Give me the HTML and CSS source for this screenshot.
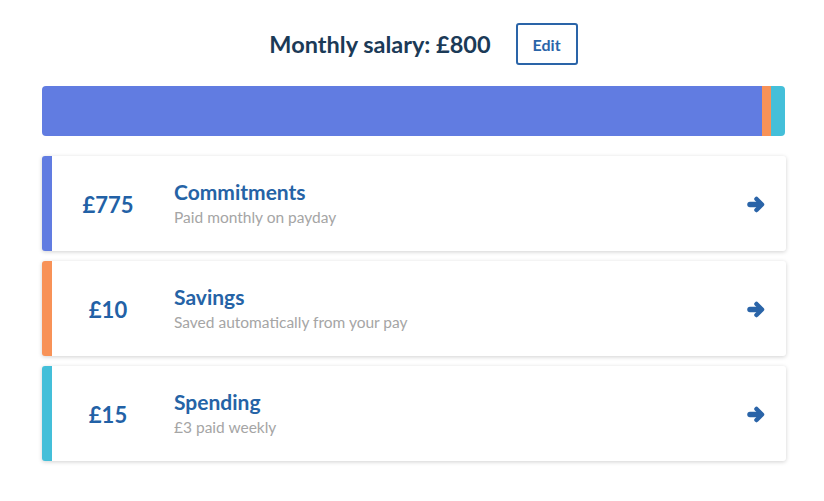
FILE: index.html
```html
<!DOCTYPE html>
<html lang="en">
<head>
  <meta charset="UTF-8" />
  <title>Salary breakdown</title>
  <link rel="stylesheet" href="styles.css">
</head>
<body>
  <main class="budget">
    <header class="salary">
      <h1>Monthly salary: £800</h1>
      <button class="edit-btn">Edit</button>
    </header>

    <div class="bar">
      <div class="bar-seg commitments" style="width: 96.875%"></div>
      <div class="bar-seg savings" style="width: 1.25%"></div>
      <div class="bar-seg spending" style="width: 1.875%"></div>
    </div>

    <section class="pot commitments">
      <div class="pot-amount">£775</div>
      <div class="pot-info">
        <h2>Commitments</h2>
        <p>Paid monthly on payday</p>
      </div>
      <svg class="arrow" viewBox="0 0 19 17"><line x1="3" y1="8.5" x2="13" y2="8.5"/><polyline points="9.5,3 15,8.5 9.5,14"/></svg>
    </section>

    <section class="pot savings">
      <div class="pot-amount">£10</div>
      <div class="pot-info">
        <h2>Savings</h2>
        <p>Saved automatically from your pay</p>
      </div>
      <svg class="arrow" viewBox="0 0 19 17"><line x1="3" y1="8.5" x2="13" y2="8.5"/><polyline points="9.5,3 15,8.5 9.5,14"/></svg>
    </section>

    <section class="pot spending">
      <div class="pot-amount">£15</div>
      <div class="pot-info">
        <h2>Spending</h2>
        <p>£3 paid weekly</p>
      </div>
      <svg class="arrow" viewBox="0 0 19 17"><line x1="3" y1="8.5" x2="13" y2="8.5"/><polyline points="9.5,3 15,8.5 9.5,14"/></svg>
    </section>
  </main>
</body>
</html>
```

FILE: styles.css
```css
body {
  font-family: 'Lato', sans-serif;
  background: white;
  margin: 0;
  padding: 0;
}
.budget {
  width: 744px;
  margin: 0 0 0 42px;
  padding-top: 23px;
}
.salary {
  display: flex;
  justify-content: center;
  align-items: center;
  gap: 25px;
  margin-left: 19px;
}
.salary h1 {
  margin: 0;
  font-size: 23.5px;
  font-weight: 700;
  color: #1b3a57;
}
.edit-btn {
  font-family: inherit;
  width: 62px;
  height: 42px;
  background: white;
  color: #2a64a8;
  border: 2px solid #2a64a8;
  border-radius: 3px;
  font-size: 16px;
  font-weight: 700;
  cursor: pointer;
}
.bar {
  display: flex;
  width: 743px;
  height: 50px;
  margin-top: 21px;
  margin-bottom: 20px;
  border-radius: 4px;
  overflow: hidden;
}
.bar-seg.commitments { background: #617ce1; }
.bar-seg.savings { background: #f89257; }
.bar-seg.spending { background: #44bfd9; }

.pot {
  display: flex;
  align-items: center;
  height: 95px;
  margin-bottom: 10px;
  background: white;
  border-radius: 3px;
  border-left: 10px solid;
  box-shadow: 0 1px 4px rgba(0,0,0,0.18);
}
.pot.commitments { border-left-color: #617ce1; }
.pot.savings { border-left-color: #f89257; }
.pot.spending { border-left-color: #44bfd9; }
.pot-amount {
  width: 112px;
  text-align: center;
  font-size: 22px;
  font-weight: 700;
  color: #2261a6;
  padding-top: 2px;
}
.pot-info {
  flex: 1;
  padding-left: 10px;
  padding-bottom: 2px;
}
.pot-info h2 {
  margin: 0 0 4px;
  font-size: 21px;
  font-weight: 700;
  color: #2563a6;
}
.pot-info p {
  margin: 0;
  font-size: 15.5px;
  color: #a5a5a5;
}
.arrow {
  width: 19px;
  height: 17px;
  margin-right: 20px;
  margin-top: 2px;
  fill: none;
  stroke: #2a64a8;
  stroke-linecap: round;
  stroke-linejoin: round;
}
.arrow line {
  stroke-width: 5.5;
}
.arrow polyline {
  stroke-width: 4.5;
}
```
